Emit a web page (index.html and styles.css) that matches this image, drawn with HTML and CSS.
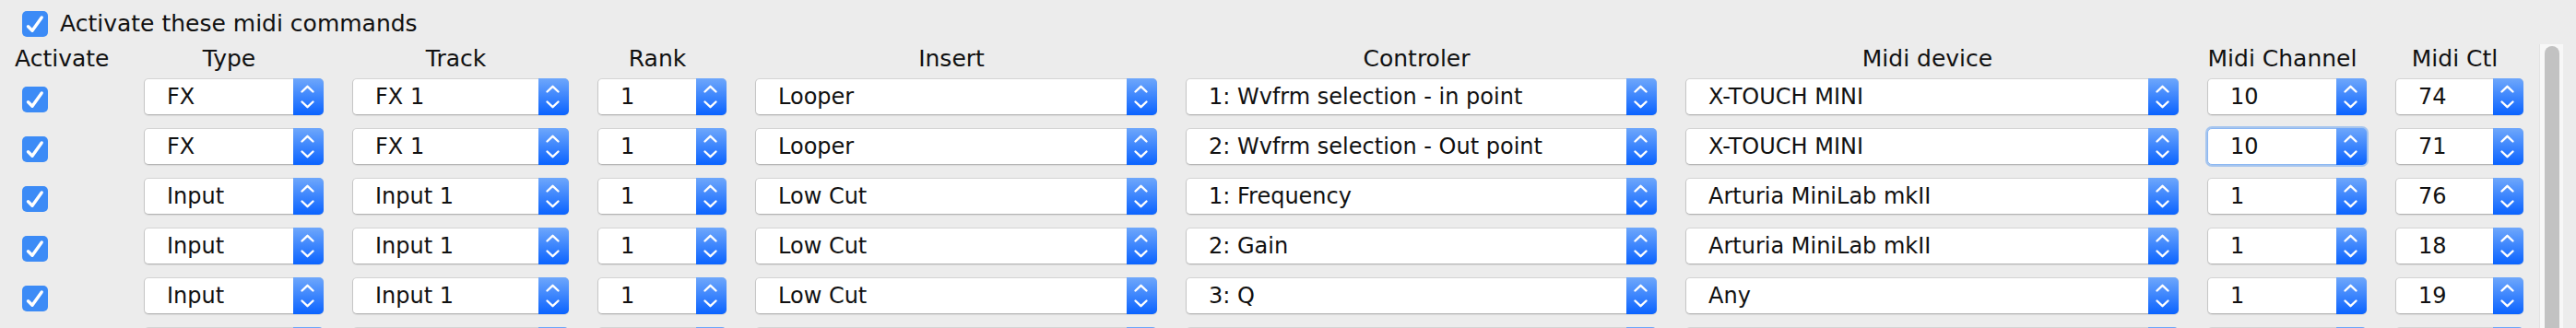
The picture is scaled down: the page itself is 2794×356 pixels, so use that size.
FILE: index.html
```html
<!DOCTYPE html>
<html lang="en">
<head>
  <meta charset="UTF-8">
  <title>Midi commands</title>
  <link rel="stylesheet" href="styles.css">
</head>
<body>
  <!-- shared glyphs -->
  <svg class="defs" width="0" height="0">
    <symbol id="chev" viewBox="0 0 33 40">
      <polyline points="9.5,14.5 15.5,8.8 21.5,14.5" />
      <polyline points="9.5,25.5 15.5,31.2 21.5,25.5" />
    </symbol>
    <symbol id="tick" viewBox="0 0 28 28">
      <rect width="28" height="28" rx="5" class="box" />
      <polyline points="6.5,16.8 11,21.3 21.2,7" class="mark" />
    </symbol>
  </svg>

  <div class="prefs">
    <label class="master">
      <svg class="check"><use href="#tick" /></svg>
      Activate these midi commands
    </label>

    <div class="scroller">
      <div class="table">
        <div class="grid head">
          <div class="th th-left">Activate</div>
          <div class="th">Type</div>
          <div class="th">Track</div>
          <div class="th">Rank</div>
          <div class="th">Insert</div>
          <div class="th">Controler</div>
          <div class="th">Midi device</div>
          <div class="th">Midi Channel</div>
          <div class="th">Midi Ctl</div>
        </div>

        <div class="grid rows" id="rows"></div>
      </div>

      <div class="scrollbar"><div class="thumb"></div></div>
    </div>
  </div>

  <script>
    // lignes de commandes midi
    const commands = [
      ['FX', 'FX 1', '1', 'Looper', '1: Wvfrm selection - in point', 'X-TOUCH MINI', '10', '74'],
      ['FX', 'FX 1', '1', 'Looper', '2: Wvfrm selection - Out point', 'X-TOUCH MINI', '10', '71'],
      ['Input', 'Input 1', '1', 'Low Cut', '1: Frequency', 'Arturia MiniLab mkII', '1', '76'],
      ['Input', 'Input 1', '1', 'Low Cut', '2: Gain', 'Arturia MiniLab mkII', '1', '18'],
      ['Input', 'Input 1', '1', 'Low Cut', '3: Q', 'Any', '1', '19'],
      // ligne suivante, coupée par le bas de la vue
      ['', '', '', '', '', '', '', '']
    ];

    function popup(value, focused) {
      return `<div class="popup${focused ? ' focused' : ''}">
        <span class="value">${value}</span>
        <span class="stepper"><svg><use href="#chev" /></svg></span>
      </div>`;
    }

    const rows = document.getElementById('rows');
    rows.innerHTML = commands.map((row, i) =>
      `<div class="cell-check"><svg class="check"><use href="#tick" /></svg></div>` +
      row.map((value, col) => popup(value, i === 1 && col === 6)).join('')
    ).join('');
  </script>
</body>
</html>
```

FILE: styles.css
```css
:root {
  --bg: #ececec;
  --blue: #3c8bf6;
  --blue-top: #6ea7fb;
  --blue-bottom: #0a63ff;
  --border: #c6c6c6;
  --text: #111;
}

* {
  box-sizing: border-box;
  margin: 0;
  padding: 0;
}

body {
  background: var(--bg);
  color: var(--text);
  font-family: 'DejaVu Sans', 'Liberation Sans', sans-serif;
  width: 2794px;
  height: 356px;
  overflow: hidden;
}

.defs {
  position: absolute;
}

.check {
  width: 28px;
  height: 28px;
  display: block;
}

.box {
  fill: var(--blue);
}

.mark {
  fill: none;
  stroke: #fff;
  stroke-width: 3.4;
  stroke-linecap: round;
  stroke-linejoin: round;
}

/* case principale */
.master {
  display: flex;
  align-items: center;
  gap: 13px;
  padding: 12px 0 0 24px;
  height: 40px;
  margin-bottom: 8px;
  font-size: 25px;
  line-height: 28px;
}

/* zone défilante */
.scroller {
  display: flex;
  height: 308px;
  overflow: hidden;
}

.table {
  padding-left: 16px;
}

.grid {
  display: grid;
  grid-template-columns: 109px 195px 235px 140px 436px 511px 535px 173px 139px;
  column-gap: 31px;
}

.head {
  height: 37px;
}

.th {
  font-size: 25px;
  line-height: 32px;
  text-align: center;
  padding-right: 10px;
  white-space: nowrap;
}

.th-left {
  text-align: left;
}

.rows {
  grid-auto-rows: 40px;
  row-gap: 14px;
}

.cell-check {
  padding: 9px 0 0 8px;
}

/* menus déroulants */
.popup {
  display: flex;
  height: 40px;
  background: #fff;
  border: 1px solid var(--border);
  border-top-color: #d4d4d4;
  border-bottom-color: #b4b4b4;
  border-radius: 5px;
  box-shadow: 0 1px 1px rgba(0, 0, 0, 0.08);
}

.popup.focused {
  border-color: #8db8f2;
  box-shadow: 0 0 0 2px rgba(110, 165, 240, 0.55);
}

.value {
  flex: 1;
  padding-left: 24px;
  font-size: 24px;
  line-height: 38px;
  white-space: nowrap;
  overflow: hidden;
}

.stepper {
  width: 33px;
  margin: -1px -1px -1px 0;
  border-radius: 0 5px 5px 0;
  background: linear-gradient(var(--blue-top), var(--blue-bottom));
}

.stepper svg {
  width: 33px;
  height: 40px;
  display: block;
  fill: none;
  stroke: #fff;
  stroke-width: 2.4;
  stroke-linecap: round;
  stroke-linejoin: round;
}

/* barre de défilement */
.scrollbar {
  width: 26px;
  margin-left: 17px;
  background: #f7f7f7;
  border-left: 1px solid #e2e2e2;
  padding: 2px 4px 0 5px;
}

.thumb {
  height: 400px;
  border-radius: 8px;
  background: #c2c2c2;
}
```
